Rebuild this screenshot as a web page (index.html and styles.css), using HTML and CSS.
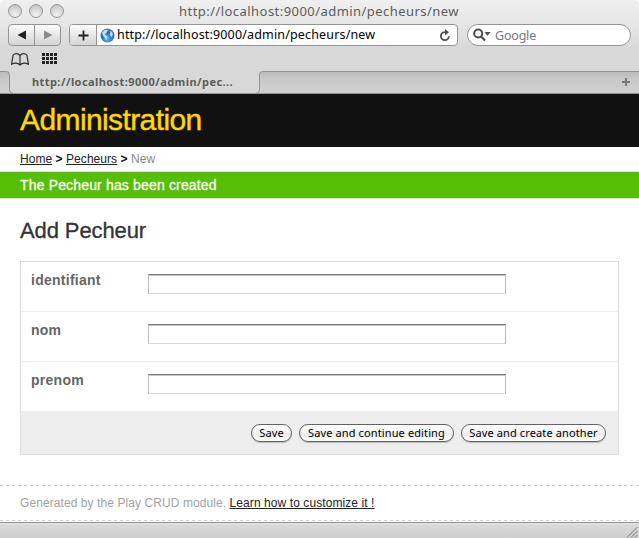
FILE: index.html
```html
<!DOCTYPE html>
<html lang="en">
<head>
<meta charset="utf-8">
<title>Administration</title>
<link rel="stylesheet" href="styles.css">
</head>
<body>
<div class="window">
  <header class="chrome">
    <div class="titlebar">
      <div class="lights"><i></i><i></i><i></i></div>
      <span class="window-title">http://localhost:9000/admin/pecheurs/new</span>
    </div>
    <div class="toolbar">
      <div class="nav">
        <span><svg width="10" height="10" viewBox="0 0 10 10"><path d="M9 .5v9L.5 5z" fill="#222"/></svg></span>
        <span><svg width="10" height="10" viewBox="0 0 10 10"><path d="M1 .5v9L9.500 5z" fill="#8b8b8b"/></svg></span>
      </div>
      <div class="address">
        <span class="add"><svg width="11" height="11" viewBox="0 0 11 11"><path d="M5.500 .5v10M.5 5.500h10" stroke="#222" stroke-width="1.800"/></svg></span>
        <svg class="globe" width="15" height="15" viewBox="0 0 15 15">
          <defs><radialGradient id="sea" cx=".5" cy=".75" r=".75"><stop offset="0" stop-color="#58b6ee"/><stop offset=".6" stop-color="#2468b3"/><stop offset="1" stop-color="#5a80b5"/></radialGradient></defs>
          <circle cx="7.500" cy="7.500" r="7" fill="url(#sea)"/>
          <path d="M2 4.500Q4 2 6.500 1.800L8 2.800 6.500 4 6.800 5 5 6 5.500 7 7.800 8.500 7 10.500 6 12.500 5 10 3 7.500zM10 2.800Q12 3.500 12.800 5.500L12.500 8 11.500 9 10.500 7.500 9.500 6.500 10.500 4.500z" fill="#d4ebfa" opacity=".9"/>
        </svg>
        <span class="url">http://localhost:9000/admin/pecheurs/new</span>
        <svg class="reload" width="12" height="13" viewBox="0 0 12 13"><path d="M7 3.100H5.600a4 4 0 1 0 4.300 4.200" fill="none" stroke="#505050" stroke-width="1.900"/><path d="M6 0l4 3.200-4 3.200z" fill="#505050"/></svg>
      </div>
      <div class="search">
        <svg width="18" height="14" viewBox="0 0 18 14"><circle cx="5.200" cy="5.500" r="4" fill="none" stroke="#4d4d4d" stroke-width="2"/><path d="M8 8.500l4 4" stroke="#4d4d4d" stroke-width="2.200"/><path d="M11.500 4h6l-3 3.800z" fill="#4d4d4d"/></svg>
        <span>Google</span>
      </div>
    </div>
    <div class="bookmarks">
      <svg width="18" height="13" viewBox="0 0 18 13"><path d="M9 2.500Q7.500.7 5.500.7T2 2.200L.6 11.300Q3 10 5 10.200T9 12Q11 10.300 13 10.200T17.400 11.300L16 2.200Q14.500.7 12.500.7T9 2.500V12" fill="none" stroke="#303030" stroke-width="1.200"/></svg>
      <svg width="16" height="12" viewBox="0 0 16 12"><path d="M0 1.500h16M0 5.500h16M0 9.500h16" stroke="#222" stroke-width="3" stroke-dasharray="3 1"/></svg>
    </div>
    <div class="tabs">
      <svg class="tab-shape" width="639" height="23" viewBox="0 0 639 23">
        <defs><linearGradient id="shade" x2="0" y2="1"><stop offset="0" stop-color="#bababa"/><stop offset=".35" stop-color="#c9c9c9"/><stop offset="1" stop-color="#d0d0d0"/></linearGradient></defs>
        <path d="M-2 .5H6.500Q9.500.5 9.500 3.500V18.500Q9.500 22.500 13.500 22.500H-2zM641 .5H262.500Q259.500.5 259.500 3.500V18.500Q259.500 22.500 255.500 22.500H641z" fill="url(#shade)" stroke="#929292"/>
        <path d="M0 22.500h639" stroke="#929292"/>
        <path d="M626 7v8M622 11h8" stroke="#777" stroke-width="2"/>
      </svg>
      <span class="tab-title">http://localhost:9000/admin/pec...</span>
    </div>
  </header>

  <main>
    <div class="brand"><span>Administration</span></div>
    <nav class="crumbs"><a>Home</a> <b>&gt;</b> <a>Pecheurs</a> <b>&gt;</b> <span>New</span></nav>
    <div class="flash"><span>The Pecheur has been created</span></div>
    <h2><span>Add Pecheur</span></h2>
    <form>
      <div class="field"><label for="a">identifiant</label><input id="a" type="text"></div>
      <div class="field"><label for="b">nom</label><input id="b" type="text"></div>
      <div class="field"><label for="c">prenom</label><input id="c" type="text"></div>
      <div class="actions">
        <button type="button" class="save">Save</button>
        <button type="button" class="continue">Save and continue editing</button>
        <button type="button" class="another">Save and create another</button>
      </div>
    </form>
    <footer><span>Generated by the Play CRUD module. </span><a>Learn how to customize it !</a></footer>
  </main>
  <div class="status"><svg width="12" height="12" viewBox="0 0 12 12"><path d="M1 11.500L11.500 1M5 11.500L11.500 5M9 11.500L11.500 9" stroke="#777" fill="none"/></svg></div>
</div>
</body>
</html>
```
FILE: styles.css
```css
* { box-sizing: border-box; }
body { margin: 0; background: #fff; font-family: "Liberation Sans", Arial, sans-serif; overflow: hidden; }
svg { display: block; flex: none; }
.window { width: 639px; height: 538px; display: flex; flex-direction: column; white-space: nowrap; }

.chrome {
  height: 94px;
  flex: none;
  display: flex;
  flex-direction: column;
  background: linear-gradient(#f0f0f0, #e6e6e6 24px, #d8d8d8 50px, #d8d8d8);
  border-radius: 5px 5px 0 0;
  font-family: "Noto Sans", "Open Sans", sans-serif;
}
.titlebar { height: 24px; display: flex; padding: 4px 0 0 8px; }
.lights { display: flex; gap: 7px; width: 171px; }
.lights i {
  width: 14px; height: 14px;
  border: 1px solid #989898;
  border-radius: 50%;
  background: radial-gradient(circle at 50% 80%, #f2f2f2, #d0d0d0 65%, #b8b8b8);
}
.window-title { font-size: 13px; line-height: 15px; letter-spacing: 0.45px; color: #5c5c5c; }

.toolbar { height: 22px; display: flex; padding-left: 8px; }
.nav {
  width: 53px; height: 22px;
  display: flex;
  margin-right: 8px;
  border: 1px solid #949494;
  border-radius: 4px;
  background: linear-gradient(#fcfcfc, #d4d4d4);
}
.nav span { flex: 1; display: flex; align-items: center; justify-content: center; }
.nav span + span { border-left: 1px solid #949494; }
.address {
  width: 389px; height: 22px;
  display: flex;
  align-items: center;
  border: 1px solid #949494;
  border-radius: 4px;
  background: #fff;
  overflow: hidden;
}
.add { width: 27px; height: 20px; flex: none; display: flex; align-items: center; justify-content: center; border-right: 1px solid #949494; background: linear-gradient(#fcfcfc, #d4d4d4); }
.globe { margin: 0 2px 0 3px; }
.url { font-size: 12.5px; line-height: 20px; letter-spacing: 0.16px; color: #000; flex: 1; }
.reload { margin-right: 6px; }
.search {
  width: 164px; height: 22px;
  margin-left: 9px;
  padding-left: 5px;
  display: flex;
  align-items: center;
  gap: 4px;
  border: 1px solid #949494;
  border-radius: 11px;
  background: #fff;
  font-size: 12.5px;
  letter-spacing: -0.2px;
  color: #777;
}
.bookmarks { height: 25px; display: flex; gap: 13px; padding: 7px 0 0 11px; }
.tabs { height: 23px; position: relative; padding-left: 32px; }
.tab-shape { position: absolute; left: 0; top: 0; }
.tab-title { position: relative; display: block; font-size: 11px; font-weight: 700; line-height: 22px; letter-spacing: 0.43px; color: #5c5c5c; width: max-content; }

main { flex: 1; min-height: 0; }
.brand { height: 53px; background: #111; color: #ffd800; padding-left: 20px; font-size: 30px; line-height: 52px; letter-spacing: -0.6px; -webkit-text-stroke: 0.4px #ffd800; }
.crumbs { height: 24px; padding-left: 20px; font-size: 12px; line-height: 24px; letter-spacing: 0.05px; color: #888; }
.crumbs a { color: #222; text-decoration: underline; }
.crumbs b { color: #111; }
.flash { height: 28px; border: solid #ddd; border-width: 1px 0; background: #54bf04; color: #fff; padding-left: 20px; font-size: 14px; line-height: 26px; letter-spacing: 0.16px; -webkit-text-stroke: 0.3px #fff; }
h2 { margin: 0; height: 62px; padding: 18px 0 0 20px; font-size: 22px; font-weight: 400; line-height: 28px; letter-spacing: -0.1px; color: #333; -webkit-text-stroke: 0.3px #333; }
form { width: 599px; height: 194px; margin-left: 20px; border: 1px solid #ddd; }
.field { height: 50px; display: flex; padding: 12px 0 0 10px; border-bottom: 1px solid #eee; }
.field label { width: 117px; margin-top: -1px; font-size: 14px; font-weight: 700; line-height: 14px; letter-spacing: 0.26px; color: #666; }
.field input {
  width: 358px; height: 20px;
  padding: 0 3px;
  background: #fff;
  border: 1px solid;
  border-color: #777 #bbb #d8d8d8;
  border-radius: 0;
  box-shadow: inset 0 1px #c8c8c8;
  outline: none;
}
.actions { height: 43px; margin-top: -1px; display: flex; justify-content: flex-end; gap: 7px; padding: 13px 12px 0 0; background: #eee; }
button {
  height: 18px;
  padding: 0 0 1px;
  border: 1px solid #626262;
  border-radius: 9px;
  background: linear-gradient(#fff, #f3f3f3 50%, #eaeaea 51%, #fff);
  box-shadow: 0 1px 1px #bbb;
  font: 11px/14px "Noto Sans", "Open Sans", sans-serif;
  letter-spacing: 0.12px;
  color: #000;
}
.save { width: 41px; }
.continue { width: 155px; }
.another { width: 145px; }
footer {
  height: 36px;
  margin-top: 30px;
  padding-left: 20px;
  border: solid transparent;
  border-width: 1px 0;
  background:
    repeating-linear-gradient(90deg, #ccc 0 3px, transparent 3px 6px) top / 100% 1px no-repeat border-box,
    repeating-linear-gradient(90deg, #ccc 0 3px, transparent 3px 6px) bottom / 100% 1px no-repeat border-box;
  font-size: 12px;
  line-height: 34px;
  letter-spacing: 0.08px;
  color: #a2a2a2;
}
footer a { color: #222; text-decoration: underline; }
.status { height: 16px; flex: none; display: flex; justify-content: flex-end; padding: 3px 1px 0 0; border-top: 1px solid #909090; background: linear-gradient(#e6e6e6, #d9d9d9 2px, #cecece); }
```
